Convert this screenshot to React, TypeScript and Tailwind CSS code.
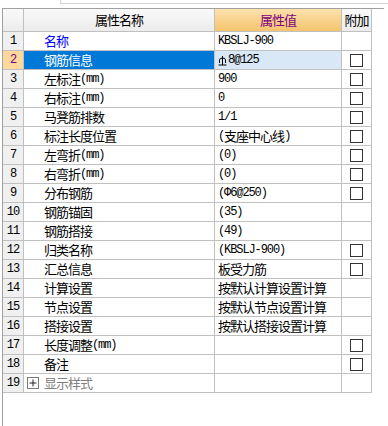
import React from "react";

type Row = {
  n: number;
  name: string;
  val: string;
  cb: boolean;
  blue?: boolean;
  sel?: boolean;
  exp?: boolean;
};

const rows: Row[] = [
  { n: 1, name: "名称", val: "KBSLJ-900", cb: false, blue: true },
  { n: 2, name: "钢筋信息", val: "§8@125", cb: true, sel: true },
  { n: 3, name: "左标注(mm)", val: "900", cb: true },
  { n: 4, name: "右标注(mm)", val: "0", cb: true },
  { n: 5, name: "马凳筋排数", val: "1/1", cb: true },
  { n: 6, name: "标注长度位置", val: "(支座中心线)", cb: true },
  { n: 7, name: "左弯折(mm)", val: "(0)", cb: true },
  { n: 8, name: "右弯折(mm)", val: "(0)", cb: true },
  { n: 9, name: "分布钢筋", val: "(Φ6@250)", cb: true },
  { n: 10, name: "钢筋锚固", val: "(35)", cb: false },
  { n: 11, name: "钢筋搭接", val: "(49)", cb: false },
  { n: 12, name: "归类名称", val: "(KBSLJ-900)", cb: true },
  { n: 13, name: "汇总信息", val: "板受力筋", cb: true },
  { n: 14, name: "计算设置", val: "按默认计算设置计算", cb: false },
  { n: 15, name: "节点设置", val: "按默认节点设置计算", cb: false },
  { n: 16, name: "搭接设置", val: "按默认搭接设置计算", cb: false },
  { n: 17, name: "长度调整(mm)", val: "", cb: true },
  { n: 18, name: "备注", val: "", cb: true },
  { n: 19, name: "显示样式", val: "", cb: false, exp: true },
];

function RebarSym() {
  return (
    <svg width="9" height="11" viewBox="0 0 9 11" className="inline-block mr-[1px]" style={{ verticalAlign: "-1px" }}>
      <path d="M1.5 8 V5 Q1.5 3 4.5 3 Q7.5 3 7.5 5 V8" fill="none" stroke="currentColor" strokeWidth="1" />
      <path d="M4.5 1 V10" stroke="currentColor" strokeWidth="1" />
      <path d="M0.5 10 H8.5" stroke="currentColor" strokeWidth="1" />
    </svg>
  );
}

function Mixed({ s }: { s: string }) {
  const parts = s.split(/([\x20-\x7eΦ]+)/);
  return (
    <>
      {parts.map((p, i) => {
        if (!p) return null;
        if (/^[\x20-\x7eΦ]+$/.test(p)) {
          return (
            <span key={i} className="font-['Liberation_Mono'] text-[12px] tracking-[-1.1px]">
              {p}
            </span>
          );
        }
        if (p.startsWith("§")) {
          return (
            <React.Fragment key={i}>
              <RebarSym />
              {p.slice(1) && <Mixed s={p.slice(1)} />}
            </React.Fragment>
          );
        }
        return <span key={i}>{p}</span>;
      })}
    </>
  );
}

function Checkbox() {
  return <div className="w-[13px] h-[13px] border border-[#333333] bg-white" />;
}

export default function App() {
  return (
    <div className="w-[388px] h-[426px] bg-white flex flex-col overflow-hidden font-['Noto_Sans_CJK_SC','Liberation_Sans',sans-serif] text-[12px] text-black">
      <div className="h-[8px] shrink-0">
        <div className="ml-[60px] h-[4px] border-l border-b border-[#d4d4d4]" />
      </div>
      <div className="flex-1 ml-[2px] w-[382px] border-l border-t border-[#a0a0a0]">
        <div className="grid grid-cols-[21px_191px_127px_30px] w-[369px]">
          <div className="h-[23px] border-r border-b border-[#c0c0c0] bg-gradient-to-b from-[#f9f9f9] to-[#ececec]" />
          <div className="h-[23px] border-r border-b border-[#c0c0c0] bg-gradient-to-b from-[#f9f9f9] to-[#ececec] flex items-center justify-center text-[13px] tracking-[-1px]">
            属性名称
          </div>
          <div className="h-[23px] border-r border-b border-[#c0c0c0] bg-gradient-to-b from-[#fde2ad] to-[#f3c46c] flex items-center justify-center text-[13px] tracking-[-1px] text-[#800080]">
            属性值
          </div>
          <div className="h-[23px] border-r border-b border-[#c0c0c0] bg-gradient-to-b from-[#f9f9f9] to-[#ececec] flex items-center justify-center text-[13px] tracking-[-1px]">
            附加
          </div>
          {rows.map((r) => (
            <React.Fragment key={r.n}>
              <div
                className={
                  "h-[19px] border-r border-b border-[#c0c0c0] flex items-center justify-center font-['Liberation_Mono'] text-[12px] tracking-[-1px] " +
                  (r.sel ? "bg-[#fcd89c] text-[#800080]" : "bg-[#f0f0f0]")
                }
              >
                {r.n}
              </div>
              <div
                className={
                  "h-[19px] border-r border-b border-[#c0c0c0] flex items-center whitespace-nowrap text-[13px] tracking-[-1px] " +
                  (r.exp ? "pl-[3px] " : "pl-[20px] ") +
                  (r.sel ? "bg-[#0078d7] text-white" : r.blue ? "text-[#0000ff]" : r.exp ? "text-[#808080]" : "")
                }
              >
                {r.exp && (
                  <div className="w-[12px] h-[12px] border border-[#7a7a7a] mr-[5px] flex items-center justify-center">
                    <svg width="8" height="8" viewBox="0 0 8 8">
                      <path d="M0.5 4 H7.5 M4 0.5 V7.5" stroke="#222" strokeWidth="1" />
                    </svg>
                  </div>
                )}
                <Mixed s={r.name} />
              </div>
              <div
                className={
                  "h-[19px] border-r border-b border-[#c0c0c0] flex items-center pl-[3px] whitespace-nowrap text-[13px] tracking-[-1px] " +
                  (r.sel ? "bg-[#d9e8f7]" : "")
                }
              >
                <Mixed s={r.val} />
              </div>
              <div className="h-[19px] border-r border-b border-[#c0c0c0] flex items-center justify-center">
                {r.cb && <Checkbox />}
              </div>
            </React.Fragment>
          ))}
        </div>
      </div>
    </div>
  );
}
